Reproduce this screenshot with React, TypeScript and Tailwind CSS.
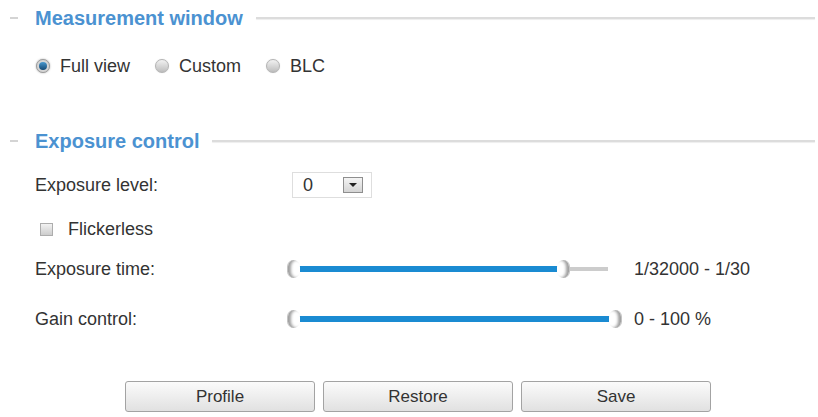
import { FunctionComponent } from "react";

const SectionHeader: FunctionComponent<{ title: string }> = ({ title }) => (
  <div className="flex items-center h-[36px] pl-[10px] pr-[3px]">
    <div className="w-[8px] h-[2px] bg-[#d4d4d4]" />
    <div className="ml-[17px] text-[20px] font-bold text-[#4b92d1] leading-none">
      {title}
    </div>
    <div className="ml-[13px] flex-1 h-[2px] bg-[#dcdcdc] shadow-[0_1px_1px_#eeeeee]" />
  </div>
);

const Radio: FunctionComponent<{ checked?: boolean; label: string }> = ({
  checked,
  label,
}) => (
  <div className="flex items-center">
    <div
      className={
        checked
          ? "w-[14px] h-[14px] rounded-full bg-[#d6d6d6] border border-[#9c9c9c] flex items-center justify-center shadow-[0_0_2px_#aaaaaa]"
          : "w-[14px] h-[14px] rounded-full bg-gradient-to-b from-[#f2f2f2] to-[#bdbdbd] border border-[#b3b3b3] shadow-[0_0_1px_#cccccc]"
      }
    >
      {checked && (
        <div className="w-[8px] h-[8px] rounded-full bg-gradient-to-b from-[#4a9ad0] to-[#174a74]" />
      )}
    </div>
    <span className="ml-[10px]">{label}</span>
  </div>
);

const Handle: FunctionComponent<{ side: "left" | "right"; x: number }> = ({
  side,
  x,
}) => (
  <div
    className={
      side === "left"
        ? "absolute top-[3px] w-[13px] h-[18px] rounded-full bg-white border-l border-[#c4c4c4] shadow-[inset_3px_0_3px_#9f9f9f]"
        : "absolute top-[3px] w-[13px] h-[18px] rounded-full bg-white border-r border-[#c4c4c4] shadow-[inset_-3px_0_3px_#9f9f9f]"
    }
    style={{ left: x }}
  />
);

const Slider: FunctionComponent<{ fill: number; track: number }> = ({
  fill,
  track,
}) => (
  <div className="relative w-[337px] h-[24px]">
    <div
      className="absolute left-[5px] top-[10px] h-[4px] bg-[#cccccc]"
      style={{ width: track }}
    />
    <div
      className="absolute left-[5px] top-[9px] h-[6px] bg-[#1a8bd2]"
      style={{ width: fill }}
    />
    <Handle side="left" x={0} />
    <Handle side="right" x={fill - 3} />
  </div>
);

const Button: FunctionComponent<{ label: string }> = ({ label }) => (
  <button className="w-[190px] h-[31px] rounded-[3px] border border-[#a3a3a3] bg-gradient-to-b from-[#fbfbfb] to-[#e1e1e1] text-[17px] text-[#333]">
    {label}
  </button>
);

export default function App() {
  return (
    <div
      className="w-[818px] h-[417px] bg-white text-[18px] text-[#333] leading-none overflow-hidden"
      style={{ fontFamily: '"Liberation Sans", Arial, sans-serif' }}
    >
      <SectionHeader title="Measurement window" />

      <div className="mt-[18px] h-[24px] flex items-center gap-[25px] pl-[36px]">
        <Radio checked label="Full view" />
        <Radio label="Custom" />
        <Radio label="BLC" />
      </div>

      <div className="mt-[45px]">
        <SectionHeader title="Exposure control" />
      </div>

      <div className="mt-[13px] h-[26px] flex items-center pl-[35px]">
        <span className="w-[257px]">Exposure level:</span>
        <div className="w-[80px] h-[26px] border border-[#dedede] flex items-center pl-[10px] pr-[8px] justify-between">
          <span>0</span>
          <div className="w-[20px] h-[16px] border border-[#8e8e8e] bg-gradient-to-b from-[#f4f4f4] to-[#d4d4d4] flex items-center justify-center">
            <div className="w-0 h-0 border-l-[4px] border-r-[4px] border-t-[4px] border-l-transparent border-r-transparent border-t-[#222]" />
          </div>
        </div>
      </div>

      <div className="mt-[19px] h-[24px] flex items-center pl-[40px]">
        <div className="w-[13px] h-[13px] border border-[#adadad] bg-gradient-to-b from-[#f2f2f2] to-[#cdcdcd]" />
        <span className="ml-[15px]">Flickerless</span>
      </div>

      <div className="mt-[16px] h-[24px] flex items-center pl-[35px]">
        <span className="w-[252px]">Exposure time:</span>
        <Slider fill={273} track={316} />
        <span className="ml-[10px]">1/32000 - 1/30</span>
      </div>

      <div className="mt-[26px] h-[24px] flex items-center pl-[35px]">
        <span className="w-[252px]">Gain control:</span>
        <Slider fill={325} track={325} />
        <span className="ml-[10px]">0 - 100 %</span>
      </div>

      <div className="mt-[50px] flex gap-[8px] pl-[125px]">
        <Button label="Profile" />
        <Button label="Restore" />
        <Button label="Save" />
      </div>
    </div>
  );
}
